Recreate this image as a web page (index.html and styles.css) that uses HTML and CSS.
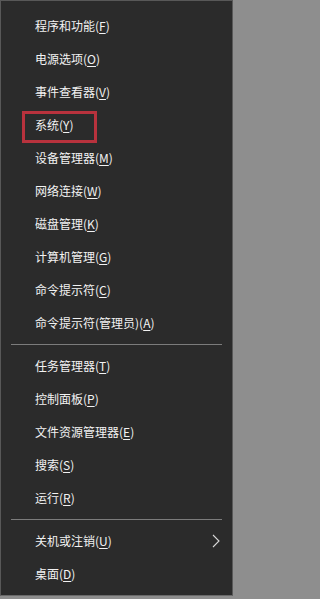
FILE: index.html
```html
<!DOCTYPE html>
<html lang="zh-CN">
<head>
<meta charset="utf-8">
<title>Win+X 菜单</title>
<link rel="stylesheet" href="styles.css">
</head>
<body>
<div class="menu">
  <div class="item">程序和功能(<u>F</u>)</div>
  <div class="item">电源选项(<u>O</u>)</div>
  <div class="item">事件查看器(<u>V</u>)</div>
  <div class="item">系统(<u>Y</u>)<span class="highlight"></span></div>
  <div class="item">设备管理器(<u>M</u>)</div>
  <div class="item">网络连接(<u>W</u>)</div>
  <div class="item">磁盘管理(<u>K</u>)</div>
  <div class="item">计算机管理(<u>G</u>)</div>
  <div class="item">命令提示符(<u>C</u>)</div>
  <div class="item">命令提示符(管理员)(<u>A</u>)</div>
  <div class="sep"></div>
  <div class="item">任务管理器(<u>T</u>)</div>
  <div class="item">控制面板(<u>P</u>)</div>
  <div class="item">文件资源管理器(<u>E</u>)</div>
  <div class="item">搜索(<u>S</u>)</div>
  <div class="item">运行(<u>R</u>)</div>
  <div class="sep"></div>
  <div class="item item-sub"><span>关机或注销(<u>U</u>)</span><svg class="chev" width="8" height="14" viewBox="0 0 8 14"><polyline points="1,1 7,7 1,13" fill="none" stroke="#d8d8d8" stroke-width="1.1"/></svg></div>
  <div class="item">桌面(<u>D</u>)</div>
</div>
</body>
</html>
```

FILE: styles.css
```css
html {
  background: #8e8e8e;
}
body {
  margin: 0;
  height: 599px;
  overflow: hidden;
}
.menu {
  width: 231px;
  background: #2b2b2b;
  border: 1px solid #585858;
  border-bottom-color: #6a6a6a;
  padding: 8px 0 5px 0;
  font-family: "Noto Sans CJK SC", "Microsoft YaHei", sans-serif;
  font-size: 12px;
  color: #f2f2f2;
}
.item {
  position: relative;
  height: 33px;
  line-height: 33px;
  padding-left: 34px;
  padding-right: 12px;
  white-space: nowrap;
}
.item u {
  text-decoration: underline;
  text-decoration-thickness: 1px;
  text-underline-offset: 2px;
}
.item-sub {
  display: flex;
  align-items: center;
  justify-content: space-between;
}
.chev {
  display: block;
}
.sep {
  height: 1px;
  background: #7c7c7c;
  margin: 5px 10px 4px 10px;
}
.highlight {
  position: absolute;
  left: 21px;
  top: 3px;
  width: 69px;
  height: 26px;
  border: 3px solid #b8323d;
}
```
